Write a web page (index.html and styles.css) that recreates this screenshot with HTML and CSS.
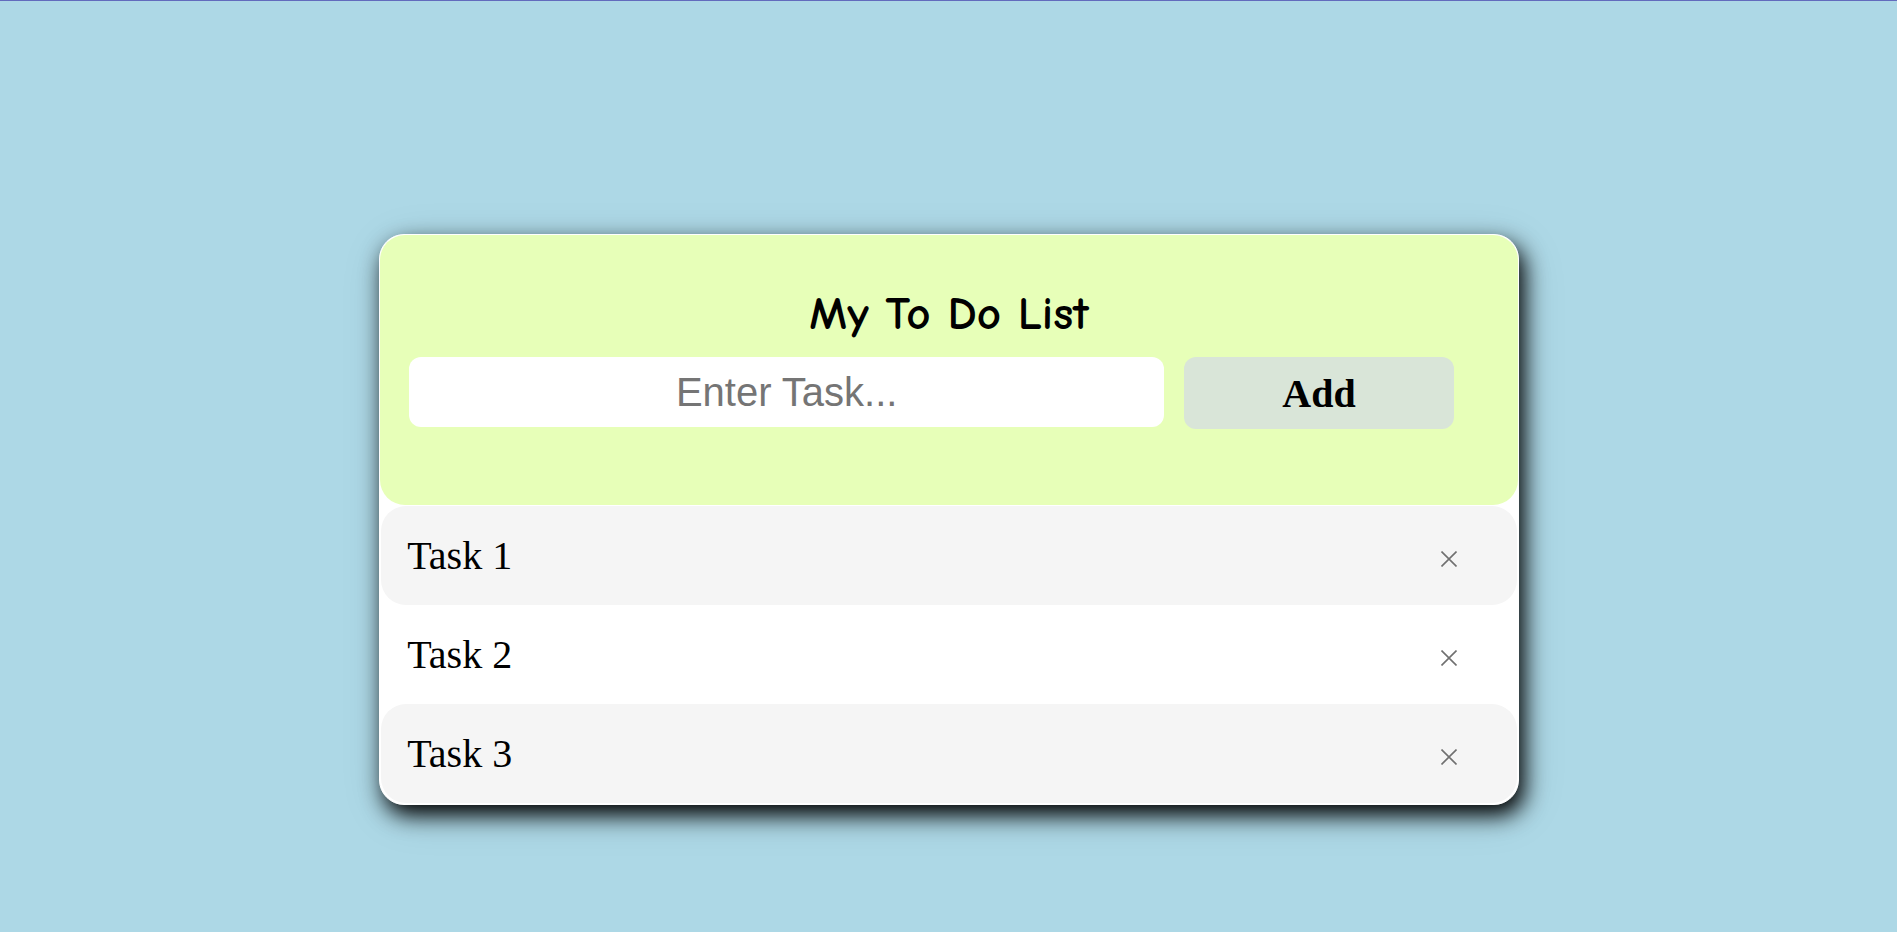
FILE: index.html
```html
<!DOCTYPE html>
<html lang="en">
<head>
<meta charset="UTF-8">
<meta name="viewport" content="width=device-width, initial-scale=1">
<title>My To Do List</title>
<link rel="stylesheet" href="styles.css">
</head>
<body class="page">
<main class="card">
  <header class="header">
    <h1 class="title">My To Do List</h1>
    <form class="form">
      <input class="task-input" type="text" placeholder="Enter Task..." aria-label="Task">
      <button class="add" type="button">Add</button>
    </form>
  </header>
  <ul class="list">
    <li class="item"><span>Task 1</span><button class="close" type="button" aria-label="Remove Task 1"><svg class="cross" viewBox="0 0 16 16"><path d="M.5.5l15 15M15.5.5l-15 15"/></svg></button></li>
    <li class="item"><span>Task 2</span><button class="close" type="button" aria-label="Remove Task 2"><svg class="cross" viewBox="0 0 16 16"><path d="M.5.5l15 15M15.5.5l-15 15"/></svg></button></li>
    <li class="item"><span>Task 3</span><button class="close" type="button" aria-label="Remove Task 3"><svg class="cross" viewBox="0 0 16 16"><path d="M.5.5l15 15M15.5.5l-15 15"/></svg></button></li>
  </ul>
</main>
</body>
</html>
```
FILE: styles.css
```css
* {
  box-sizing: border-box;
}

.page {
  margin: 0;
  min-height: 100vh;
  padding: 25vh 0 48px 1px;
  border-top: 1px solid #626bbd;
  background: lightblue;
  font-family: "Liberation Serif", "Times New Roman", serif;
  font-size: 40px;
}

.card {
  width: calc(60% + 2px);
  margin: 0 auto;
  border: 1px solid #fff;
  border-radius: 25px;
  background: #fff;
  box-shadow: 5px 10px 22px #000, 5px 10px 44px rgba(0, 0, 0, 0.15);
}

.header {
  padding: 53px 64px 76px 29px;
  border-radius: 25px;
  background: #e7ffb8;
}

.title {
  margin: 0 -35px 17px 0;
  font-family: "Comic Sans MS", "Comic Neue", cursive;
  font-size: 47px;
  line-height: 52px;
  font-weight: bold;
  text-align: center;
}

.form {
  display: grid;
  grid-template-columns: 14fr 5fr;
  align-items: start;
  gap: 20px;
}

.task-input {
  width: 100%;
  min-width: 0;
  height: 70px;
  padding: 0;
  border: 0;
  border-radius: 12px;
  background: #fff;
  font-family: "Liberation Sans", Arial, sans-serif;
  font-size: 40px;
  text-align: center;
}

.task-input::placeholder {
  color: #757575;
}

.add {
  height: 72px;
  padding: 0;
  border: 0;
  border-radius: 12px;
  background: #d9e5d8;
  color: #000;
  font: bold 40px "Liberation Serif", "Times New Roman", serif;
  cursor: pointer;
}

.list {
  margin: 0;
  padding: 1px;
  list-style: none;
}

.item {
  display: flex;
  align-items: center;
  justify-content: space-between;
  padding: 26px 56px 26px 26px;
  border-radius: 25px;
  line-height: 47px;
}

.item:nth-child(odd) {
  background: #f5f5f5;
}

.close {
  display: flex;
  padding: 8px 4px 2px;
  border: 0;
  background: none;
  color: #707070;
  cursor: pointer;
}

.cross {
  width: 16px;
  height: 16px;
  fill: none;
  stroke: currentColor;
  stroke-width: 1.6;
}
```
